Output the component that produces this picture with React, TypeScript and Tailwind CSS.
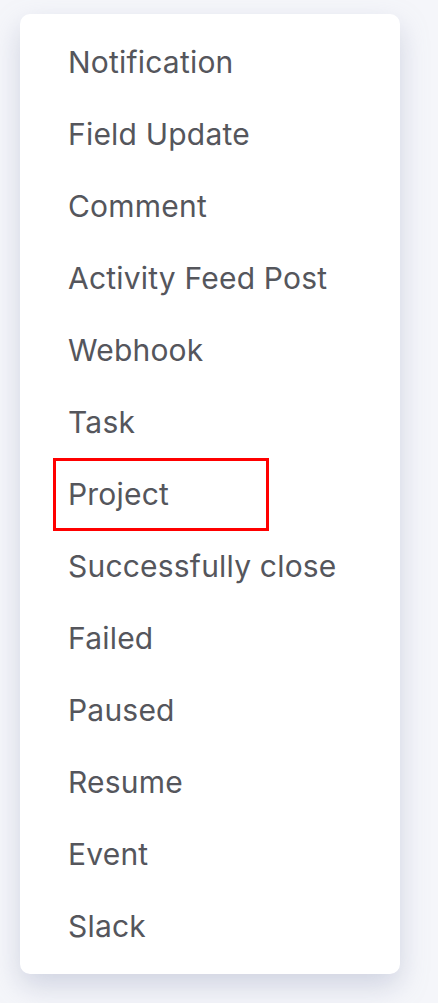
const items = [
  "Notification",
  "Field Update",
  "Comment",
  "Activity Feed Post",
  "Webhook",
  "Task",
  "Project",
  "Successfully close",
  "Failed",
  "Paused",
  "Resume",
  "Event",
  "Slack",
];

export default function App() {
  return (
    <div className="min-h-screen bg-[#f5f6fa] pt-[14px] pl-[20px] font-['Inter',sans-serif]">
      <ul className="w-[380px] rounded-[10px] bg-white pt-[12px] pb-[12px] shadow-[0_12px_28px_rgba(140,150,180,0.35)]">
        {items.map((item) => (
          <li key={item} className="h-[72px] pl-[33px]">
            <div
              className={
                item === "Project"
                  ? "flex h-[73px] w-[216px] items-center border-[3px] border-[#ff0000] pl-[12px] text-[30px] tracking-[0.2px] text-[#55565c]"
                  : "flex h-[72px] items-center pl-[15px] text-[30px] tracking-[0.2px] text-[#55565c]"
              }
            >
              {item}
            </div>
          </li>
        ))}
      </ul>
    </div>
  );
}
